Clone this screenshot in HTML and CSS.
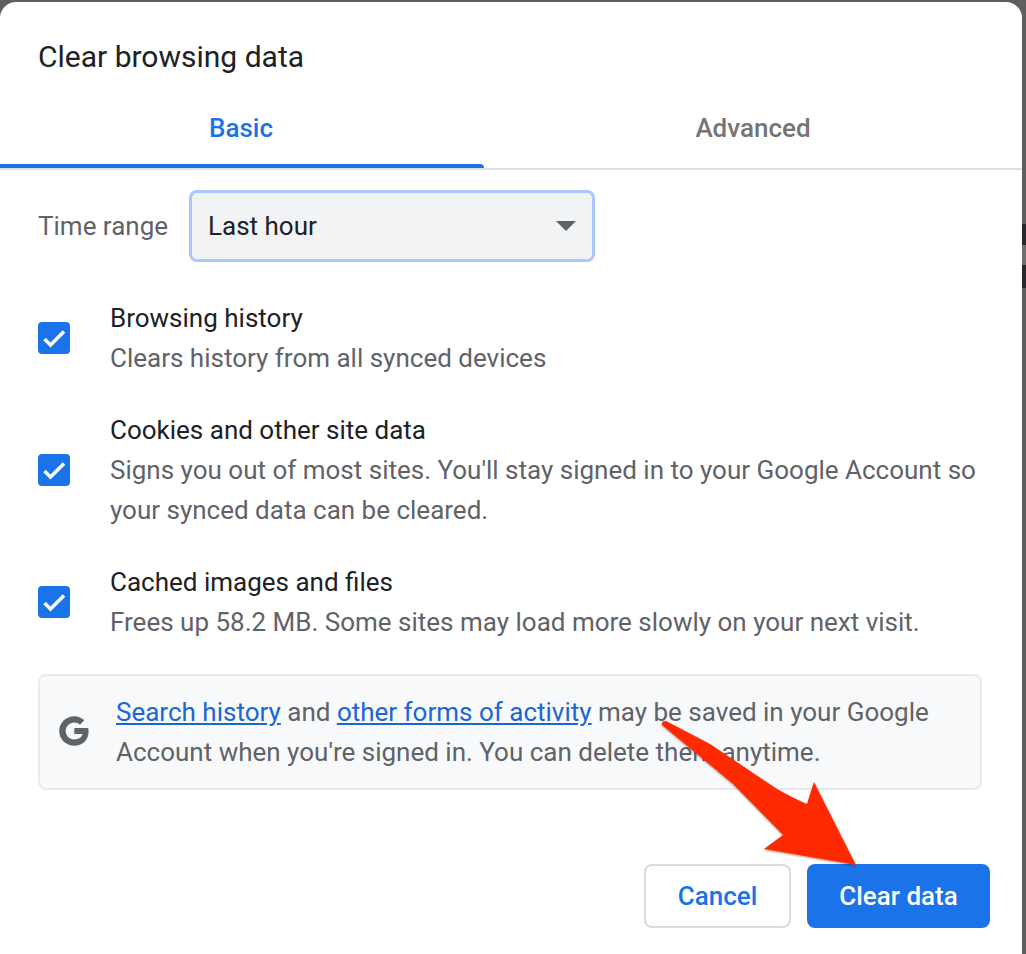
FILE: index.html
```html
<!DOCTYPE html>
<html lang="en">
<head>
  <meta charset="UTF-8" />
  <title>Clear browsing data</title>
  <link rel="stylesheet" href="styles.css">
</head>
<body>

  <div class="backdrop-bar"><span class="backdrop-mark"></span></div>

  <div class="dialog">
    <h1>Clear browsing data</h1>

    <div class="tabs">
      <div class="tab tab-basic active">Basic</div>
      <div class="tab tab-advanced">Advanced</div>
    </div>

    <div class="time-range">
      <span class="range-label">Time range</span>
      <div class="select">
        <span>Last hour</span>
        <span class="caret"></span>
      </div>
    </div>

    <div class="option option-first">
      <div class="checkbox">
        <svg width="32" height="32" viewBox="0 0 32 32"><path d="M6.500 17l6 6L26 9.500" fill="none" stroke="#fff" stroke-width="3.500"/></svg>
      </div>
      <div class="option-text">
        <div class="option-title">Browsing history</div>
        <div class="option-sub">Clears history from all synced devices</div>
      </div>
    </div>

    <div class="option">
      <div class="checkbox">
        <svg width="32" height="32" viewBox="0 0 32 32"><path d="M6.500 17l6 6L26 9.500" fill="none" stroke="#fff" stroke-width="3.500"/></svg>
      </div>
      <div class="option-text">
        <div class="option-title">Cookies and other site data</div>
        <div class="option-sub">Signs you out of most sites. You'll stay signed in to your Google Account so your synced data can be cleared.</div>
      </div>
    </div>

    <div class="option">
      <div class="checkbox">
        <svg width="32" height="32" viewBox="0 0 32 32"><path d="M6.500 17l6 6L26 9.500" fill="none" stroke="#fff" stroke-width="3.500"/></svg>
      </div>
      <div class="option-text">
        <div class="option-title">Cached images and files</div>
        <div class="option-sub">Frees up 58.2 MB. Some sites may load more slowly on your next visit.</div>
      </div>
    </div>

    <div class="notice">
      <svg class="g-icon" width="32" height="32" viewBox="0 0 32 32">
        <path d="M16.300 13v6h8.200c-.7 3.500-3.800 5.400-8.200 5.400-4.900 0-8.600-3.900-8.600-8.400s3.700-8.400 8.600-8.400c2.200 0 4.100.8 5.600 2.100l4.400-4.400C23.700 2.900 20.300 1.200 16.300 1.200 8 1.200 1.200 7.900 1.200 16S8 30.800 16.300 30.800c8.100 0 14.300-5.600 14.300-14.300 0-1.200-.1-2.400-.4-3.500z" fill="#5f6368"/>
      </svg>
      <div class="notice-text">
        <a href="#">Search history</a> and <a href="#">other forms of activity</a> may be saved in your Google Account when you're signed in. You can delete them anytime.
      </div>
    </div>

    <div class="buttons">
      <button class="btn-cancel">Cancel</button>
      <button class="btn-clear">Clear data</button>
    </div>
  </div>

  <svg class="arrow" width="1026" height="954" viewBox="0 0 1026 954">
    <defs>
      <filter id="arrow-shadow" x="-10%" y="-10%" width="120%" height="120%">
        <feDropShadow dx="0" dy="1" stdDeviation="1" flood-color="#000" flood-opacity="0.4"/>
      </filter>
    </defs>
    <path d="M662 725 Q661 721 666 721 L710 744 L777 789 Q795 799 807 804 L814 782 L856 865 L764 849 L783 835 L733 784z" fill="#ff2a00" filter="url(#arrow-shadow)"/>
  </svg>

</body>
</html>
```

FILE: styles.css
```css
html, body {
  margin: 0;
  height: 954px;
  overflow: hidden;
}

body {
  background-color: #5f5f5f;
  font-family: Roboto, Arial, sans-serif;
  font-size: 26px;
  color: #202124;
  position: relative;
}

.dialog {
  box-sizing: border-box;
  width: 1022px;
  height: 952px;
  margin-top: 2px;
  background: white;
  border-radius: 16px 16px 0 0;
}

h1 {
  margin: 0;
  padding: 37px 38px 0;
  font-size: 30px;
  font-weight: 400;
  line-height: 36px;
}

.tabs {
  display: flex;
  height: 93px;
  border-bottom: 2px solid #e0e0e0;
}

.tab {
  position: relative;
  display: flex;
  align-items: center;
  justify-content: center;
  box-sizing: border-box;
  padding-top: 12px;
  font-weight: 500;
  color: #757575;
}

.tab-basic {
  width: 482px;
  margin-right: 2px;
}

.tab-advanced {
  width: 538px;
}

.tab.active {
  color: #1a73e8;
}

.tab.active::after {
  content: "";
  position: absolute;
  left: 0;
  right: -2px;
  bottom: 0;
  height: 4px;
  background: #1a73e8;
  border-top-right-radius: 4px;
}

.time-range {
  display: flex;
  align-items: center;
  padding: 20px 38px 0;
}

.range-label {
  color: #5f6368;
  width: 151px;
}

.select {
  box-sizing: border-box;
  width: 406px;
  height: 72px;
  display: flex;
  align-items: center;
  justify-content: space-between;
  padding: 0 16px 0 16px;
  background: #f1f3f4;
  border: 3px solid #a8c7fa;
  border-radius: 8px;
}

.caret {
  width: 0;
  height: 0;
  border-left: 10px solid transparent;
  border-right: 10px solid transparent;
  border-top: 10px solid #5f6368;
}

.option {
  display: flex;
  align-items: center;
  padding: 0 38px;
  margin-top: 32px;
}

.option-first {
  margin-top: 36px;
}

.checkbox {
  flex: none;
  width: 32px;
  height: 32px;
  background: #1a73e8;
  border-radius: 4px;
  margin-right: 40px;
}

.checkbox svg {
  display: block;
}

.option-title {
  line-height: 40px;
}

.option-sub {
  color: #5f6368;
  line-height: 40px;
}

.notice {
  box-sizing: border-box;
  margin: 32px 40px 0 38px;
  width: 944px;
  height: 116px;
  display: flex;
  align-items: center;
  padding: 0 16px 0 18px;
  background: #f8f9fa;
  border: 2px solid #e8eaed;
  border-radius: 8px;
}

.g-icon {
  flex: none;
  margin-right: 26px;
  margin-top: -3px;
}

.notice-text {
  color: #5f6368;
  line-height: 40px;
}

.notice-text a {
  color: #1a66d6;
}

.buttons {
  display: flex;
  justify-content: flex-end;
  gap: 16px;
  padding-right: 32px;
  margin-top: 74px;
}

button {
  font-family: Roboto, Arial, sans-serif;
  font-size: 26px;
  font-weight: 500;
  height: 64px;
  border-radius: 8px;
  cursor: pointer;
}

.btn-cancel {
  width: 147px;
  background: white;
  color: #1a73e8;
  border: 2px solid #dadce0;
}

.btn-clear {
  width: 183px;
  background: #1a73e8;
  color: white;
  border: none;
}

.backdrop-bar {
  position: absolute;
  right: 0;
  top: 224px;
  width: 4px;
  height: 64px;
  background: #26282c;
}

.backdrop-mark {
  position: absolute;
  top: 21px;
  left: 0;
  width: 4px;
  height: 20px;
  background: #6e6e6e;
}

.arrow {
  position: absolute;
  left: 0;
  top: 0;
}
```
